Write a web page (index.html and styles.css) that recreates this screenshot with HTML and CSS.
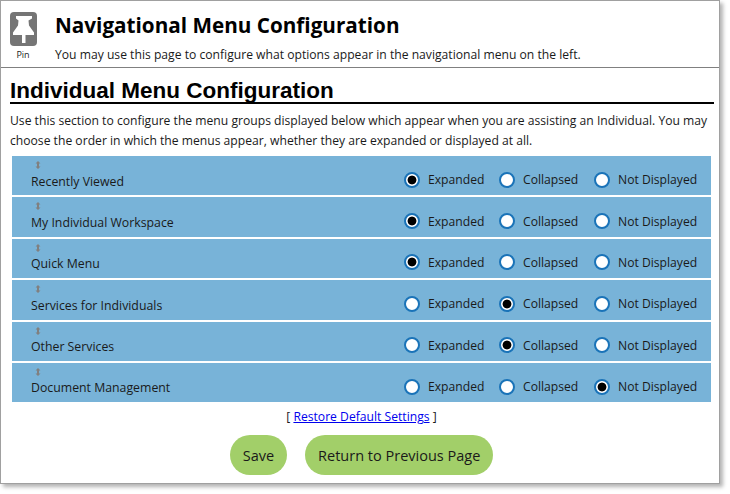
FILE: index.html
```html
<!DOCTYPE html>
<html lang="en">

<head>
  <meta charset="UTF-8">
  <title>Navigational Menu Configuration</title>
  <link rel="stylesheet" href="styles.css">
</head>

<body>
  <div class="frame">
    <div class="header">
      <div class="pin">
        <svg class="pin-icon" width="27" height="34" viewBox="0 0 27 34">
          <rect width="27" height="34" rx="4" fill="#757575" />
          <path d="M6 4h16v2.500l-3.500 2 .5 5 5 7v2.500h-21v-2.500l5-7 .5-5-2.500-2z" fill="#fff" />
          <rect x="12" y="23" width="3.500" height="8" fill="#fff" />
        </svg>
        <span class="pin-label">Pin</span>
      </div>
      <div class="header-text">
        <h1>Navigational Menu Configuration</h1>
        <p>You may use this page to configure what options appear in the navigational menu on the left.</p>
      </div>
    </div>

    <div class="content">
      <h2>Individual Menu Configuration</h2>
      <p class="intro">Use this section to configure the menu groups displayed below which appear when you are assisting an Individual. You may choose the order in which the menus appear, whether they are expanded or displayed at all.</p>

      <div class="rows">
        <div class="row">
          <div class="row-name">
            <svg class="grip" width="6" height="8" viewBox="0 0 6 8"><path d="M3 0l2.500 2.500h-1.500v3h1.500l-2.500 2.500-2.500-2.500h1.500v-3h-1.500z" /></svg>
            <span>Recently Viewed</span>
          </div>
          <div class="opts">
            <label class="opt"><input type="radio" name="m1" checked><span>Expanded</span></label>
            <label class="opt"><input type="radio" name="m1"><span>Collapsed</span></label>
            <label class="opt"><input type="radio" name="m1"><span>Not Displayed</span></label>
          </div>
        </div>
        <div class="row">
          <div class="row-name">
            <svg class="grip" width="6" height="8" viewBox="0 0 6 8"><path d="M3 0l2.500 2.500h-1.500v3h1.500l-2.500 2.500-2.500-2.500h1.500v-3h-1.500z" /></svg>
            <span>My Individual Workspace</span>
          </div>
          <div class="opts">
            <label class="opt"><input type="radio" name="m2" checked><span>Expanded</span></label>
            <label class="opt"><input type="radio" name="m2"><span>Collapsed</span></label>
            <label class="opt"><input type="radio" name="m2"><span>Not Displayed</span></label>
          </div>
        </div>
        <div class="row">
          <div class="row-name">
            <svg class="grip" width="6" height="8" viewBox="0 0 6 8"><path d="M3 0l2.500 2.500h-1.500v3h1.500l-2.500 2.500-2.500-2.500h1.500v-3h-1.500z" /></svg>
            <span>Quick Menu</span>
          </div>
          <div class="opts">
            <label class="opt"><input type="radio" name="m3" checked><span>Expanded</span></label>
            <label class="opt"><input type="radio" name="m3"><span>Collapsed</span></label>
            <label class="opt"><input type="radio" name="m3"><span>Not Displayed</span></label>
          </div>
        </div>
        <div class="row">
          <div class="row-name">
            <svg class="grip" width="6" height="8" viewBox="0 0 6 8"><path d="M3 0l2.500 2.500h-1.500v3h1.500l-2.500 2.500-2.500-2.500h1.500v-3h-1.500z" /></svg>
            <span>Services for Individuals</span>
          </div>
          <div class="opts">
            <label class="opt"><input type="radio" name="m4"><span>Expanded</span></label>
            <label class="opt"><input type="radio" name="m4" checked><span>Collapsed</span></label>
            <label class="opt"><input type="radio" name="m4"><span>Not Displayed</span></label>
          </div>
        </div>
        <div class="row">
          <div class="row-name">
            <svg class="grip" width="6" height="8" viewBox="0 0 6 8"><path d="M3 0l2.500 2.500h-1.500v3h1.500l-2.500 2.500-2.500-2.500h1.500v-3h-1.500z" /></svg>
            <span>Other Services</span>
          </div>
          <div class="opts">
            <label class="opt"><input type="radio" name="m5"><span>Expanded</span></label>
            <label class="opt"><input type="radio" name="m5" checked><span>Collapsed</span></label>
            <label class="opt"><input type="radio" name="m5"><span>Not Displayed</span></label>
          </div>
        </div>
        <div class="row">
          <div class="row-name">
            <svg class="grip" width="6" height="8" viewBox="0 0 6 8"><path d="M3 0l2.500 2.500h-1.500v3h1.500l-2.500 2.500-2.500-2.500h1.500v-3h-1.500z" /></svg>
            <span>Document Management</span>
          </div>
          <div class="opts">
            <label class="opt"><input type="radio" name="m6"><span>Expanded</span></label>
            <label class="opt"><input type="radio" name="m6"><span>Collapsed</span></label>
            <label class="opt"><input type="radio" name="m6" checked><span>Not Displayed</span></label>
          </div>
        </div>
      </div>

      <p class="restore">[ <a href="#">Restore Default Settings</a> ]</p>

      <div class="buttons">
        <button class="btn">Save</button>
        <button class="btn">Return to Previous Page</button>
      </div>
    </div>
  </div>
</body>

</html>
```

FILE: styles.css
```css
* {
  margin: 0;
  padding: 0;
  box-sizing: border-box;
}

body {
  min-height: 100vh;
  background: #fff;
  font-family: "Open Sans", "Noto Sans", sans-serif;
  font-size: 12.15px;
  color: #1a1a1a;
}

.frame {
  width: 720px;
  height: 484px;
  border: 1px solid #a0a0a0;
  box-shadow: 3px 3px 4px rgba(0, 0, 0, 0.3);
}

.header {
  display: flex;
  height: 67px;
  border-bottom: 1px solid #808080;
}

.pin {
  display: flex;
  flex-direction: column;
  align-items: center;
  width: 44px;
  padding: 11px 0 0 0;
}

.pin-icon {
  display: block;
}

.pin-label {
  font-size: 9px;
  margin-top: 3px;
  line-height: 12px;
}

.header-text {
  padding: 10px 0 0 10px;
}

h1 {
  font-size: 20.7px;
  font-weight: 700;
  line-height: 29px;
  color: #000;
}

.header-text p {
  margin-top: 7px;
  line-height: 16px;
}

.content {
  padding: 0 10px;
}

h2 {
  font-family: "Liberation Sans", Arial, sans-serif;
  font-size: 22.5px;
  font-weight: 700;
  line-height: 23px;
  margin-top: 9px;
  margin-left: -1px;
  padding-top: 2px;
  width: 704px;
  color: #000;
  border-bottom: 2px solid #000;
}

.intro {
  margin-top: 7px;
  line-height: 19.5px;
  width: 700px;
  margin-left: -1px;
}

.rows {
  margin: 6px 0 0 1px;
  width: 699px;
  display: flex;
  flex-direction: column;
  gap: 2px;
}

.row {
  display: flex;
  justify-content: space-between;
  height: 39.4px;
  background: #78b3d8;
}

.row-name {
  display: flex;
  flex-direction: column;
  align-items: flex-start;
  padding-left: 19px;
}

.grip {
  fill: #808080;
  margin: 5px 0 0 4px;
}

.row-name span {
  margin-top: 3.500px;
  font-size: 12.3px;
}

.opts {
  display: flex;
  align-items: center;
  padding: 8px 13px 0 0;
  height: 100%;
}

.opt {
  display: flex;
  align-items: center;
  width: 95px;
}

.opt:last-child {
  width: 104px;
}

.opt input {
  appearance: none;
  flex: none;
  width: 16px;
  height: 16px;
  border: 2px solid #1a73b8;
  border-radius: 50%;
  background: #fff;
  margin-right: 8px;
}

.opt input:checked {
  background: radial-gradient(circle, #000 0, #000 4px, #fff 4.8px);
}

.restore {
  text-align: center;
  margin-top: 7px;
  padding-left: 3px;
  line-height: 16px;
}

.restore a {
  color: #0000ee;
}

.buttons {
  display: flex;
  justify-content: center;
  gap: 18px;
  margin-top: 10px;
  padding-left: 3px;
}

.btn {
  height: 40px;
  padding: 0 13px;
  border: 0;
  border-radius: 20px;
  background: #a2cf69;
  font-family: inherit;
  font-size: 14.5px;
  color: #1a1a1a;
}
```
